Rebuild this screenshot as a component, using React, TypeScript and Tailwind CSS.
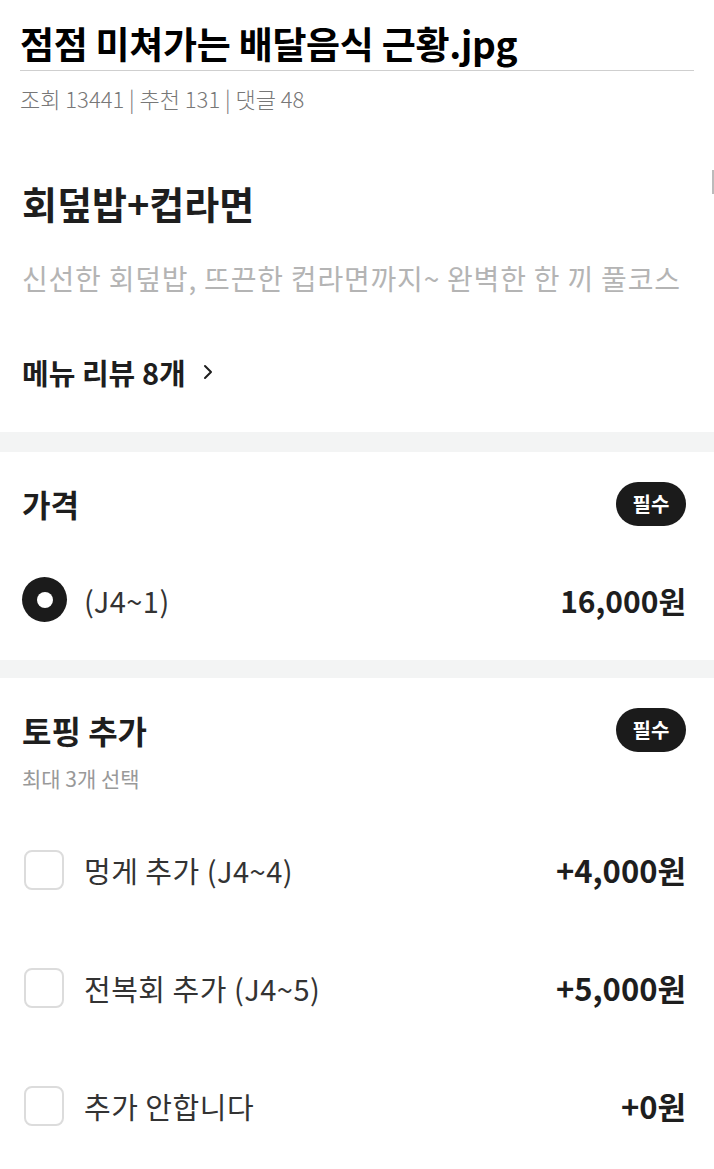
import { ChevronRight } from 'lucide-react';

const toppings = [
  { label: '멍게 추가 (J4~4)', price: '+4,000원' },
  { label: '전복회 추가 (J4~5)', price: '+5,000원' },
  { label: '추가 안합니다', price: '+0원' },
];

function Badge() {
  return (
    <div className="w-[70px] h-[44px] rounded-full bg-[#1b1b1b] text-white flex items-center justify-center text-[20px] font-bold">
      필수
    </div>
  );
}

export default function App() {
  const font = { fontFamily: '"Noto Sans CJK KR", "Noto Sans", sans-serif' };
  return (
    <div className="w-[714px] min-h-[1169px] bg-white relative overflow-hidden" style={font}>
      {/* post header */}
      <div className="px-5 pt-[19px]">
        <h1 className="text-[37px] leading-[48px] font-bold text-black tracking-[-0.3px]">점점 미쳐가는 배달음식 근황.jpg</h1>
        <div className="mt-[3px] h-px bg-[#cfcfcf]" />
        <p className="mt-[12px] text-[22px] leading-[30px] font-light text-[#777]">조회 13441 | 추천 131 | 댓글 48</p>
      </div>

      {/* screenshot body */}
      <div className="absolute right-0 top-[170px] w-[2px] h-[24px] bg-[#bbb]" />

      <div className="px-[22px] pt-[65px] pb-[40px]">
        <h2 className="text-[38px] leading-[50px] font-bold text-[#1e1e1e]">회덮밥+컵라면</h2>
        <p className="mt-[30px] text-[28px] leading-[40px] text-[#b4b4b4] tracking-[0.8px]">신선한 회덮밥, 뜨끈한 컵라면까지~ 완벽한 한 끼 풀코스</p>
        <div className="mt-[54px] flex items-center gap-[10px] text-[29px] leading-[40px] font-bold text-[#1e1e1e]">
          메뉴 리뷰 8개
          <ChevronRight className="w-[24px] h-[24px]" strokeWidth={2} />
        </div>
      </div>

      <div className="h-[20px] bg-[#f3f4f4]" />

      <div className="px-[22px] pt-[30px] pb-[38px]">
        <div className="flex items-center justify-between pr-[6px]">
          <h3 className="text-[31px] leading-[44px] font-bold text-[#1e1e1e]">가격</h3>
          <Badge />
        </div>
        <div className="mt-[51px] flex items-center justify-between pr-[6px]">
          <div className="flex items-center gap-[17px]">
            <div className="w-[45px] h-[45px] rounded-full bg-[#1b1b1b] flex items-center justify-center">
              <div className="w-[16px] h-[16px] rounded-full bg-white" />
            </div>
            <span className="text-[29px] leading-[40px] text-[#333] tracking-[0.5px]">(J4~1)</span>
          </div>
          <span className="text-[30px] leading-[40px] font-bold text-[#1e1e1e]">16,000원</span>
        </div>
      </div>

      <div className="h-[18px] bg-[#f3f4f4]" />

      <div className="px-[22px] pt-[30px]">
        <div className="flex items-center justify-between pr-[6px]">
          <h3 className="text-[32px] leading-[44px] font-bold text-[#1e1e1e]">토핑 추가</h3>
          <Badge />
        </div>
        <p className="mt-[11px] text-[21px] leading-[30px] text-[#999]">최대 3개 선택</p>
        <div className="mt-[57px] flex flex-col gap-[78px]">
          {toppings.map((t) => (
            <div key={t.label} className="flex items-center justify-between pr-[6px]">
              <div className="flex items-center gap-[20px]">
                <div className="ml-[2px] w-[40px] h-[40px] rounded-[8px] border-2 border-[#dcdcdc] bg-white" />
                <span className="text-[29px] leading-[40px] text-[#333] tracking-[0.5px]">{t.label}</span>
              </div>
              <span className="text-[31px] leading-[40px] font-bold text-[#1e1e1e]">{t.price}</span>
            </div>
          ))}
        </div>
      </div>
    </div>
  );
}
